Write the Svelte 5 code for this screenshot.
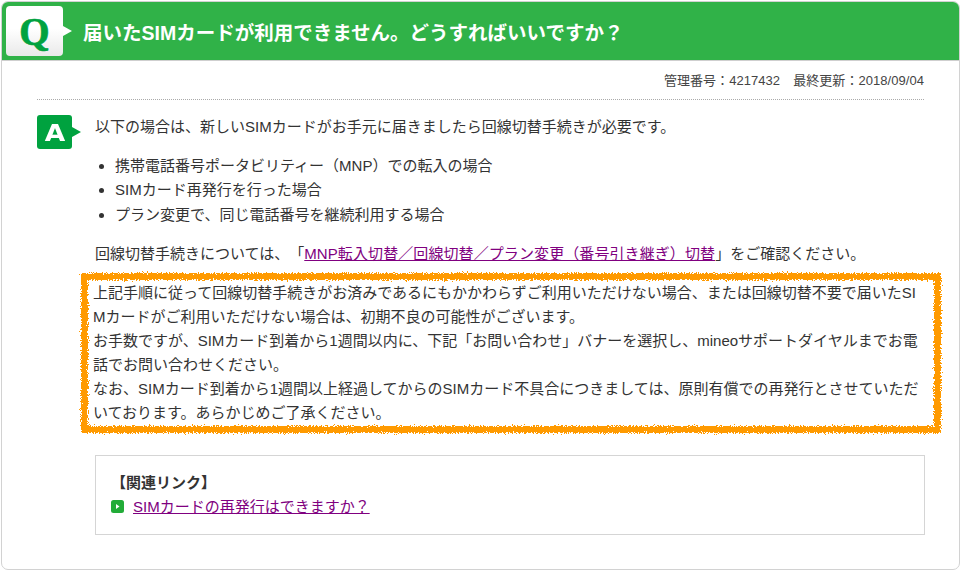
<script>
  const items = ['携帯電話番号ポータビリティー（MNP）での転入の場合', 'SIMカード再発行を行った場合', 'プラン変更で、同じ電話番号を継続利用する場合'];
</script>

<svg class="defs" width="0" height="0" aria-hidden="true">
  <filter id="rough" x="-2%" y="-5%" width="104%" height="110%">
    <feTurbulence type="fractalNoise" baseFrequency="0.8" numOctaves="3" seed="4" result="n" />
    <feDisplacementMap in="SourceGraphic" in2="n" scale="6" />
  </filter>
</svg>

<div class="card">
  <header class="head">
    <div class="q">
      <span class="qletter">Q</span>
    </div>
    <h1>届いたSIMカードが利用できません。どうすればいいですか？</h1>
  </header>

  <div class="meta">管理番号：4217432　最終更新：2018/09/04</div>

  <div class="answer">
    <div class="a"><span>A</span></div>
    <div class="body">
      <p class="lead">以下の場合は、新しいSIMカードがお手元に届きましたら回線切替手続きが必要です。</p>
      <ul>
        {#each items as item}
          <li>{item}</li>
        {/each}
      </ul>
      <p class="ref">回線切替手続きについては、「<a href="#x">MNP転入切替／回線切替／プラン変更（番号引き継ぎ）切替</a>」をご確認ください。</p>
    </div>
  </div>

  <div class="notice">
    <div class="rough"></div>
    <p>上記手順に従って回線切替手続きがお済みであるにもかかわらずご利用いただけない場合、または回線切替不要で届いたSI<br />Mカードがご利用いただけない場合は、初期不良の可能性がございます。<br />お手数ですが、SIMカード到着から1週間以内に、下記「お問い合わせ」バナーを選択し、mineoサポートダイヤルまでお電<br />話でお問い合わせください。<br />なお、SIMカード到着から1週間以上経過してからのSIMカード不具合につきましては、原則有償での再発行とさせていただ<br />いております。あらかじめご了承ください。</p>
  </div>

  <section class="related">
    <h2>【関連リンク】</h2>
    <div class="rel-link">
      <svg width="13" height="13" viewBox="0 0 13 13"><rect width="13" height="13" rx="2.5" fill="#22ac38" /><path d="M5 4l3.5 2.5L5 9z" fill="#fff" /></svg>
      <a href="#y">SIMカードの再発行はできますか？</a>
    </div>
  </section>
</div>

<style>
  :global(body) {
    margin: 0;
    background: #fff;
    font-family: "Liberation Sans", "Noto Sans CJK JP", sans-serif;
    color: #333;
    text-spacing-trim: space-all;
  }
  .defs { position: absolute; }
  .card {
    box-sizing: border-box;
    width: 959px;
    height: 569px;
    margin: 1px 0 0 1px;
    border: 1px solid #d2d2d2;
    border-radius: 7px;
    overflow: hidden;
    background: #fff;
  }
  .head {
    height: 59px;
    background: #30b248;
    border-bottom: 1px solid #cfcfcf;
    box-sizing: border-box;
    display: flex;
    align-items: center;
    padding-left: 4px;
    gap: 20px;
  }
  .q {
    position: relative;
    width: 57px;
    height: 50px;
    border-radius: 4px;
    background: linear-gradient(#fff 45%, #e9e9e9);
    display: flex;
    align-items: center;
    justify-content: center;
    flex: none;
  }
  .q::after {
    content: "";
    position: absolute;
    left: 57px;
    top: 20px;
    border-left: 9px solid #fff;
    border-top: 5px solid transparent;
    border-bottom: 5px solid transparent;
  }
  .qletter {
    font-family: "Liberation Serif", serif;
    font-weight: bold;
    font-size: 39px;
    line-height: 1;
    color: #00a23f;
    -webkit-text-stroke: 0.7px #00a23f;
  }
  h1 {
    margin: 0;
    font-size: 19.5px;
    font-weight: bold;
    color: #fff;
    white-space: nowrap;
  }
  .meta {
    margin: 0 35px;
    height: 39px;
    box-sizing: border-box;
    padding-top: 11px;
    text-align: right;
    font-size: 13px;
    line-height: 17px;
    letter-spacing: 0.05px;
    color: #444;
    border-bottom: 1px dotted #aaa;
  }
  .answer {
    display: flex;
    margin-left: 35px;
    padding-top: 15px;
  }
  .a {
    position: relative;
    width: 35px;
    height: 34px;
    flex: none;
    background: #00a23f;
    border-radius: 3px;
    display: flex;
    align-items: center;
    justify-content: center;
    color: #fff;
    font-weight: bold;
    font-size: 23px;
    font-family: "DejaVu Sans", sans-serif;
  }
  .a span {
    display: block;
    line-height: 34px;
    padding-top: 1px;
    transform: scaleX(1.15);
  }
  .a::after {
    content: "";
    position: absolute;
    left: 35px;
    top: 12px;
    border-left: 9px solid #00a23f;
    border-top: 5px solid transparent;
    border-bottom: 5px solid transparent;
  }
  .body {
    margin-left: 23px;
    font-size: 15px;
    line-height: 24.5px;
  }
  p { margin: 0; }
  ul {
    margin: 14px 0 15px;
    padding: 0 0 0 20px;
  }
  a { color: #800080; }
  .ref a { letter-spacing: 0.09px; }
  .notice {
    position: relative;
    box-sizing: border-box;
    width: 860px;
    height: 160px;
    margin: 6px 0 0 79px;
    padding: 8px 12px;
    font-size: 15px;
    line-height: 24px;
    white-space: nowrap;
  }
  .rough {
    position: absolute;
    inset: 0;
    border: 7px solid #ff9a05;
    filter: url(#rough);
  }
  .related {
    box-sizing: border-box;
    width: 830px;
    height: 80px;
    margin: 22px 0 0 93px;
    border: 1px solid #d5d5d5;
    padding: 15px;
  }
  h2 {
    margin: 0;
    font-size: 15px;
    line-height: 24px;
    font-weight: bold;
  }
  .rel-link {
    display: flex;
    align-items: center;
    gap: 9px;
    font-size: 15px;
    line-height: 24px;
  }
</style>
